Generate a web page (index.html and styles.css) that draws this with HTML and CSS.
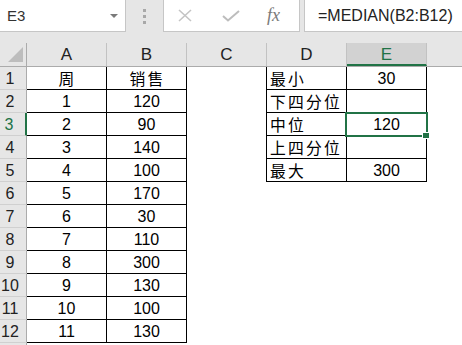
FILE: index.html
```html
<!DOCTYPE html>
<html lang="zh">
<head>
    <meta charset="UTF-8">
    <meta name="viewport" content="width=device-width, initial-scale=1.0">
    <title>MEDIAN</title>
    <link rel="stylesheet" href="styles.css">
</head>
<body>

    <!-- formula bar -->
    <div class="bar">
        <div class="namebox"><span>E3</span><span class="drop"></span></div>
        <div class="grip"><i></i><i></i><i></i></div>
        <div class="fnbox">
            <svg class="ic-x" width="16" height="13" viewBox="0 0 16 13"><path d="M2 1 L14 12 M14 1 L2 12" stroke="#c4c4c4" stroke-width="1.6" fill="none"/></svg>
            <svg class="ic-ok" width="18" height="12" viewBox="0 0 18 12"><path d="M1 6 L6 10.5 L17 1" stroke="#bdbdbd" stroke-width="2" fill="none"/></svg>
            <span class="fx">fx</span>
        </div>
        <div class="formula">=MEDIAN(B2:B12)</div>
    </div>

    <!-- sheet -->
    <div class="sheet">
        <div class="row head">
            <div class="corner"><svg width="26" height="23" viewBox="0 0 26 23"><polygon points="23,4 23,19 8,19" fill="#bdbdbd"/></svg></div>
            <div class="col">A</div>
            <div class="col">B</div>
            <div class="col">C</div>
            <div class="col">D</div>
            <div class="col sel">E</div>
            <div class="col end"></div>
        </div>

        <div class="row">
            <div class="rh">1</div>
            <div class="c t mid cn">周</div>
            <div class="c t mid cn">销售</div>
            <div class="c edge"></div>
            <div class="c t cn">最小</div>
            <div class="c t mid">30</div>
            <div class="c"></div>
        </div>
        <div class="row">
            <div class="rh">2</div>
            <div class="c t mid">1</div>
            <div class="c t mid">120</div>
            <div class="c edge"></div>
            <div class="c t cn">下四分位</div>
            <div class="c t mid"></div>
            <div class="c"></div>
        </div>
        <div class="row">
            <div class="rh on">3</div>
            <div class="c t mid">2</div>
            <div class="c t mid">90</div>
            <div class="c edge"></div>
            <div class="c t cn">中位</div>
            <div class="c t mid active">120<span class="cursor"><span class="handle"></span></span></div>
            <div class="c"></div>
        </div>
        <div class="row">
            <div class="rh">4</div>
            <div class="c t mid">3</div>
            <div class="c t mid">140</div>
            <div class="c edge"></div>
            <div class="c t cn">上四分位</div>
            <div class="c t mid"></div>
            <div class="c"></div>
        </div>
        <div class="row">
            <div class="rh">5</div>
            <div class="c t mid">4</div>
            <div class="c t mid">100</div>
            <div class="c edge"></div>
            <div class="c t cn">最大</div>
            <div class="c t mid">300</div>
            <div class="c"></div>
        </div>
        <div class="row">
            <div class="rh">6</div>
            <div class="c t mid">5</div>
            <div class="c t mid">170</div>
        </div>
        <div class="row">
            <div class="rh">7</div>
            <div class="c t mid">6</div>
            <div class="c t mid">30</div>
        </div>
        <div class="row">
            <div class="rh">8</div>
            <div class="c t mid">7</div>
            <div class="c t mid">110</div>
        </div>
        <div class="row">
            <div class="rh">9</div>
            <div class="c t mid">8</div>
            <div class="c t mid">300</div>
        </div>
        <div class="row">
            <div class="rh">10</div>
            <div class="c t mid">9</div>
            <div class="c t mid">130</div>
        </div>
        <div class="row">
            <div class="rh">11</div>
            <div class="c t mid">10</div>
            <div class="c t mid">100</div>
        </div>
        <div class="row">
            <div class="rh">12</div>
            <div class="c t mid">11</div>
            <div class="c t mid">130</div>
        </div>
        <div class="row">
            <div class="rh"></div>
        </div>
    </div>

</body>
</html>
```

FILE: styles.css
```css
body {
    margin: 0;
    background-color: white;
    font-family: 'Liberation Sans', 'Noto Sans CJK SC', sans-serif;
    color: #000;
    overflow: hidden;
}
.bar {
    display: flex;
    align-items: flex-start;
    height: 40px;
    background-color: #e6e6e6;
}
.namebox {
    box-sizing: border-box;
    width: 126px;
    height: 32px;
    background: white;
    border-right: 1px solid #c6c6c6;
    border-bottom: 1px solid #c6c6c6;
    display: flex;
    align-items: center;
    padding-left: 7px;
    font-size: 15px;
    color: #333;
}
.drop {
    margin-left: auto;
    margin-right: 7px;
    border-left: 4px solid transparent;
    border-right: 4px solid transparent;
    border-top: 4px solid #7a7a7a;
}
.grip {
    width: 37px;
    height: 32px;
    display: flex;
    flex-direction: column;
    align-items: center;
    justify-content: center;
    gap: 3px;
}
.grip i {
    width: 3px;
    height: 3px;
    background: #a8a8a8;
}
.fnbox {
    box-sizing: border-box;
    width: 137px;
    height: 32px;
    background: white;
    border: 1px solid #c6c6c6;
    border-top: none;
    display: flex;
    align-items: center;
}
.ic-x { margin-left: 13px; }
.ic-ok { margin-left: 29px; }
.fx {
    margin-left: 27px;
    font-family: 'Liberation Serif', serif;
    font-style: italic;
    font-size: 18px;
    color: #7a7a7a;
}
.formula {
    box-sizing: border-box;
    flex: 1;
    height: 32px;
    margin-left: 4px;
    background: white;
    border-left: 1px solid #c6c6c6;
    border-bottom: 1px solid #c6c6c6;
    padding-left: 13px;
    display: flex;
    align-items: center;
    font-size: 16px;
    color: #222;
}

/* grid */
.sheet {
    height: 305px;
    overflow: hidden;
}
.row {
    display: grid;
    grid-template-columns: 27px repeat(5, 80px) 1fr;
    height: 23px;
}
.row > div {
    box-sizing: border-box;
    height: 23px;
}
.head {
    height: 27px;
    background-color: #e6e6e6;
    border-bottom: 1px solid #ababab;
    box-sizing: border-box;
    align-items: end;
}
.head > div {
    height: 23px;
    border-right: 1px solid #c2c2c2;
    text-align: center;
    font-size: 17px;
    line-height: 23px;
    color: #222;
}
.head .corner {
    border-right: 1px solid #ababab;
}
.corner svg { display: block; }
.head .sel {
    background-color: #d2d2d2;
    border-bottom: 2px solid #217346;
    color: #217346;
}
.head .end { border-right: none; }

.rh {
    background-color: #e6e6e6;
    border-right: 1px solid #ababab;
    border-bottom: 1px solid #d0d0d0;
    font-size: 16px;
    line-height: 23px;
    text-align: center;
    padding-right: 6px;
    color: #222;
}
.rh.on {
    color: #217346;
    border-right: 2px solid #217346;
    padding-right: 7px;
}
.c {
    font-size: 16px;
    line-height: 23px;
    white-space: nowrap;
}
.t {
    border-right: 1px solid #000;
    border-bottom: 1px solid #000;
}
.edge { border-right: 1px solid #000; }
.mid { text-align: center; }
.cn {
    font-family: 'Noto Sans CJK SC', sans-serif;
    font-size: 15.8px;
    letter-spacing: 2.2px;
    line-height: 23px;
    padding-left: 3px;
}
.mid.cn { padding-left: 2px; }
.active { position: relative; }
.cursor {
    position: absolute;
    left: -2px;
    top: -1px;
    width: 83px;
    height: 25px;
    box-sizing: border-box;
    border: 2px solid #217346;
}
.handle {
    position: absolute;
    right: -4px;
    bottom: -4px;
    width: 6px;
    height: 5px;
    background: #217346;
    border: 1px solid white;
}
```
